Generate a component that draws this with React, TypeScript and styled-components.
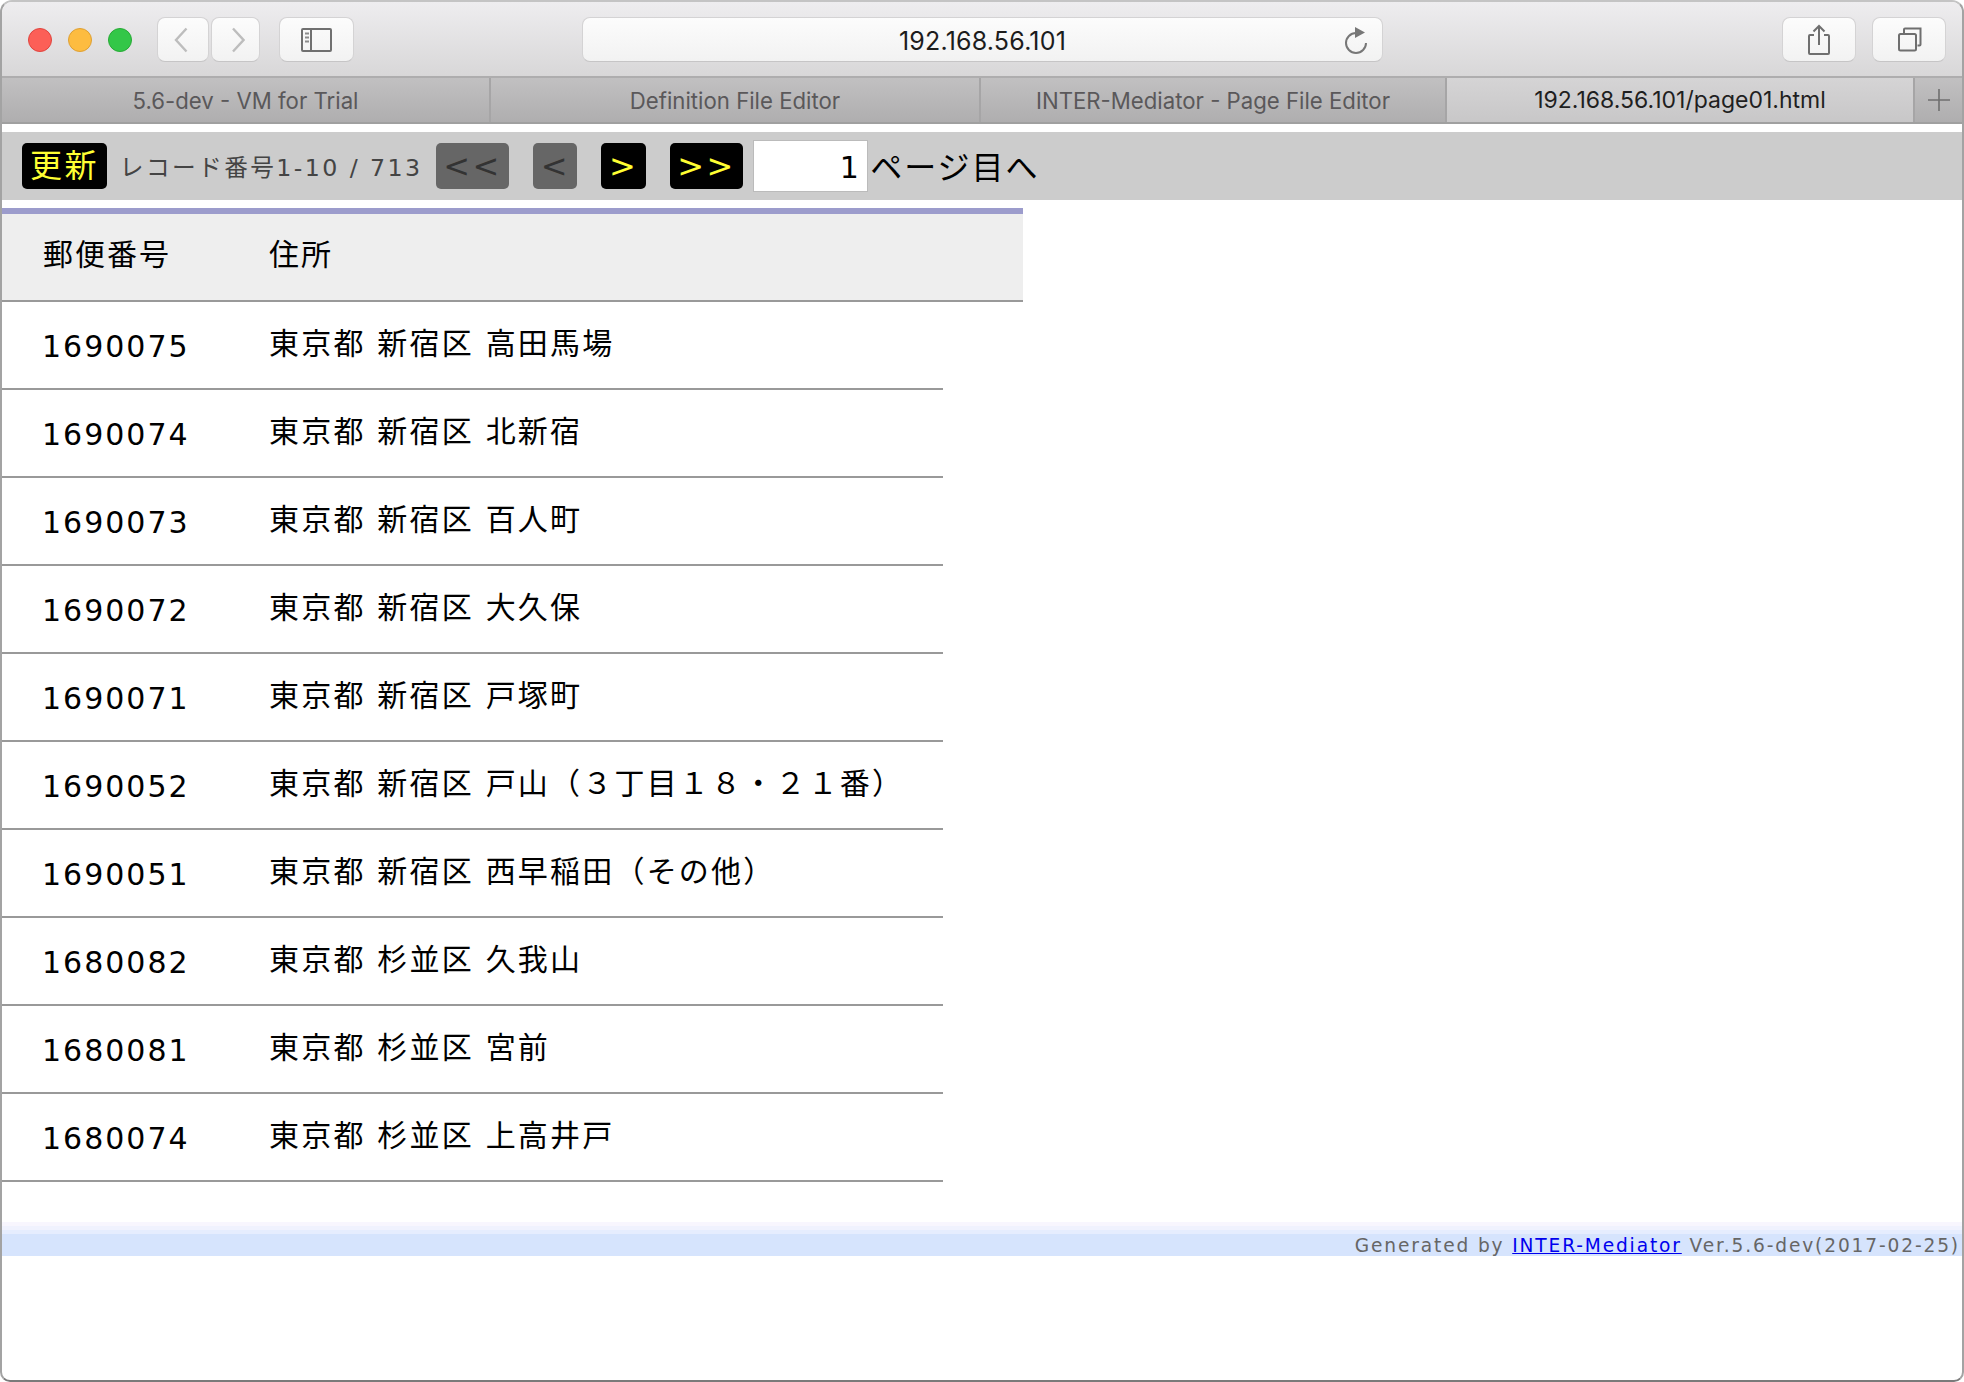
import * as React from 'react'
import styled, { createGlobalStyle } from 'styled-components'

const GlobalStyle = createGlobalStyle`
html, body {
    margin: 0;
    padding: 0;
    background: #fff;
    overflow: hidden;
}
* {
    box-sizing: border-box;
}
`

const Window = styled.div`
width: 1964px;
height: 1382px;
display: flex;
flex-direction: column;
background: #fff;
border: 2px solid #a3a3a3;
border-top-color: #c4c4c4;
border-bottom-color: #7a7a7a;
border-radius: 12px 12px 10px 10px;
overflow: hidden;
font-family: "DejaVu Sans", "Noto Sans CJK JP", sans-serif;
`

const TitleBar = styled.div`
height: 74px;
flex: none;
display: flex;
align-items: flex-start;
padding: 15px 16px 0 26px;
background: linear-gradient(#eeedef, #d8d7d8);
`

const Lights = styled.div`
display: flex;
gap: 16px;
margin: 11px 25px 0 0;
`

const Light = styled.span<{ $color: string; $edge: string }>`
width: 24px;
height: 24px;
border-radius: 50%;
background: ${p => p.$color};
border: 1px solid ${p => p.$edge};
`

const ToolButton = styled.div<{ $width: number; $gap?: number }>`
width: ${p => p.$width}px;
height: 45px;
flex: none;
display: flex;
align-items: center;
justify-content: center;
margin-right: ${p => p.$gap || 0}px;
background: linear-gradient(#fcfcfc, #f2f2f2);
border: 1px solid #d4d3d4;
border-bottom-color: #c6c5c6;
border-radius: 8px;
`

const UrlBar = styled.div`
width: 801px;
height: 45px;
flex: none;
margin: 0 auto 0 228px;
display: grid;
grid-template-columns: 1fr auto 1fr;
align-items: center;
padding-top: 3px;
background: linear-gradient(#fcfcfc, #f2f2f2);
border: 1px solid #d4d3d4;
border-bottom-color: #c6c5c6;
border-radius: 8px;
font-family: Inter, "Liberation Sans", sans-serif;
font-size: 25px;
letter-spacing: 0.2px;
color: #1c1c1c;
`

const Reload = styled.span`
justify-self: end;
display: flex;
margin: -3px 14px 0 0;
`

const TabStrip = styled.div`
height: 48px;
flex: none;
display: flex;
border-top: 2px solid #aeadae;
border-bottom: 2px solid #a0a0a0;
font-family: Inter, "Liberation Sans", sans-serif;
font-size: 22.2px;
`

const Tab = styled.div<{ $width: number; $active?: boolean }>`
width: ${p => p.$width}px;
flex: none;
display: flex;
align-items: center;
justify-content: center;
border-right: 2px solid #a6a5a6;
font-size: ${p => (p.$active ? '23px' : 'inherit')};
color: ${p => (p.$active ? '#1f1f1f' : '#5a585a')};
background: ${p => (p.$active ? 'linear-gradient(#d5d4d5, #c8c7c8)' : 'linear-gradient(#c1c0c1, #afaeaf)')};
`

const NewTab = styled.div`
flex: 1;
display: flex;
align-items: center;
justify-content: center;
background: linear-gradient(#c1c0c1, #afaeaf);
`

const NavBar = styled.div`
height: 68px;
flex: none;
margin-top: 8px;
display: flex;
align-items: center;
padding-left: 20px;
background: #ccc;
letter-spacing: 2.4px;
`

const NavButton = styled.div<{ $disabled?: boolean }>`
height: 46px;
flex: none;
display: flex;
align-items: center;
padding: 0 7.5px;
margin-right: 24px;
background: ${p => (p.$disabled ? '#666' : '#000')};
color: ${p => (p.$disabled ? '#333' : '#ff3')};
border-radius: 5px;
font-size: 32px;
line-height: 46px;
`

const RefreshButton = styled(NavButton)`
padding: 0 8px;
margin-right: 13px;
`

const RecordInfo = styled.span`
width: 316px;
flex: none;
font-size: 23.7px;
color: #444;
white-space: nowrap;
`

const PageInput = styled.div`
width: 115px;
height: 52px;
flex: none;
margin-left: -14px;
display: flex;
align-items: center;
justify-content: flex-end;
padding: 2px 6px 0 0;
background: #fff;
border: 1px solid #bbb;
color: #000;
font-size: 30px;
`

const PageLabel = styled.span`
margin: 0 0 3px 2px;
font-size: 32px;
letter-spacing: 2px;
color: #000;
white-space: nowrap;
`

const HeaderRow = styled.div`
width: 1021px;
height: 94px;
flex: none;
margin-top: 8px;
display: flex;
align-items: center;
padding-bottom: 10px;
background: #eee;
border-top: 6px solid #9c9ccc;
border-bottom: 2px solid #999;
font-size: 30px;
letter-spacing: 2px;
color: #000;
`

const BodyRow = styled.div`
width: 941px;
height: 88px;
flex: none;
display: flex;
align-items: center;
border-bottom: 2px solid #999;
font-size: 30px;
letter-spacing: 2.2px;
color: #000;
`

const ZipCell = styled.div`
width: 267px;
flex: none;
padding-left: 41px;
`

const ZipValue = styled.span`
position: relative;
top: 1px;
margin-left: -1px;
letter-spacing: 2px;
`

const AddressCell = styled.div`
flex: 1;
white-space: nowrap;
`

const BodyAddress = styled(AddressCell)`
margin-top: -8px;
`

const Footer = styled.div`
height: 34px;
flex: none;
margin-top: 40px;
display: flex;
justify-content: flex-end;
align-items: flex-end;
padding-right: 2px;
background: linear-gradient(#f8f6fe 0, #f8f6fe 4px, #f0f2fe 4px, #f0f2fe 8px, #e6edfe 8px, #e6edfe 12px, #d6e4fd 12px);
font-size: 18.6px;
line-height: 21px;
letter-spacing: 1.86px;
color: #666;
white-space: nowrap;

a {
    color: #00e;
}
`

const rows = [
    ['1690075', '東京都 新宿区 高田馬場'],
    ['1690074', '東京都 新宿区 北新宿'],
    ['1690073', '東京都 新宿区 百人町'],
    ['1690072', '東京都 新宿区 大久保'],
    ['1690071', '東京都 新宿区 戸塚町'],
    ['1690052', '東京都 新宿区 戸山（３丁目１８・２１番）'],
    ['1690051', '東京都 新宿区 西早稲田（その他）'],
    ['1680082', '東京都 杉並区 久我山'],
    ['1680081', '東京都 杉並区 宮前'],
    ['1680074', '東京都 杉並区 上高井戸'],
]

function Chevron({ dir }: { dir: 'left' | 'right' }) {
    return (
        <svg width="18" height="28" viewBox="0 0 18 28" fill="none" stroke="#bdbdbd" strokeWidth="2.4">
            <path d={dir === 'left' ? 'M12.5 2.5 L2 14 L12.5 25.5' : 'M6 2.5 L16.5 14 L6 25.5'} />
        </svg>
    )
}

function SidebarIcon() {
    return (
        <svg width="31" height="24" viewBox="0 0 31 24" fill="none" stroke="#707070" strokeWidth="2">
            <rect x="1" y="1" width="29" height="22" rx="1" />
            <path d="M10 1 V23" />
            <path d="M4 5.5 H8 M4 9.5 H8 M4 13.5 H8" stroke="#8c8c8c" />
        </svg>
    )
}

function ReloadIcon() {
    return (
        <svg width="24" height="28" viewBox="0 0 24 28" fill="none" stroke="#777" strokeWidth="2">
            <path d="M12 7 A10 10 0 1 0 22 17" />
            <path d="M11 1 L21 6.5 L11 12 Z" fill="#777" stroke="none" />
        </svg>
    )
}

function ShareIcon() {
    return (
        <svg width="24" height="32" viewBox="0 0 24 32" fill="none" stroke="#6f6f6f" strokeWidth="2">
            <path d="M7 11 H3 Q2 11 2 12 V29 Q2 30 3 30 H21 Q22 30 22 29 V12 Q22 11 21 11 H17" />
            <path d="M12 21 V2 M6.5 7.5 L12 2 L17.5 7.5" />
        </svg>
    )
}

function TabsIcon() {
    return (
        <svg width="25" height="25" viewBox="0 0 25 25" fill="none" stroke="#6f6f6f" strokeWidth="2">
            <path d="M7 6 V2.5 Q7 1.5 8 1.5 H23.5 V17.5 Q23.5 18.5 22.5 18.5 H20.5" />
            <rect x="2" y="7" width="17" height="16.5" rx="1.5" />
        </svg>
    )
}

export default function App() {
    return (
        <>
            <GlobalStyle />
            <Window>
                <TitleBar>
                    <Lights>
                        <Light $color="#fc5f57" $edge="#e0443e" />
                        <Light $color="#fdbc40" $edge="#dea034" />
                        <Light $color="#33c748" $edge="#27aa35" />
                    </Lights>
                    <ToolButton $width={52} $gap={2}><Chevron dir="left" /></ToolButton>
                    <ToolButton $width={49} $gap={19}><Chevron dir="right" /></ToolButton>
                    <ToolButton $width={75}><SidebarIcon /></ToolButton>
                    <UrlBar>
                        <span />
                        <span>192.168.56.101</span>
                        <Reload><ReloadIcon /></Reload>
                    </UrlBar>
                    <ToolButton $width={74} $gap={16}><ShareIcon /></ToolButton>
                    <ToolButton $width={74}><TabsIcon /></ToolButton>
                </TitleBar>
                <TabStrip>
                    <Tab $width={489}>5.6-dev - VM for Trial</Tab>
                    <Tab $width={490}>Definition File Editor</Tab>
                    <Tab $width={466}>INTER-Mediator - Page File Editor</Tab>
                    <Tab $width={468} $active>192.168.56.101/page01.html</Tab>
                    <NewTab>
                        <svg width="22" height="22" viewBox="0 0 22 22" stroke="#6f6f6f" strokeWidth="1.6">
                            <path d="M11 0 V22 M0 11 H22" />
                        </svg>
                    </NewTab>
                </TabStrip>
                <NavBar>
                    <RefreshButton>更新</RefreshButton>
                    <RecordInfo>レコード番号1-10 / 713</RecordInfo>
                    <NavButton $disabled>&lt;&lt;</NavButton>
                    <NavButton $disabled>&lt;</NavButton>
                    <NavButton>&gt;</NavButton>
                    <NavButton>&gt;&gt;</NavButton>
                    <PageInput>1</PageInput>
                    <PageLabel>ページ目へ</PageLabel>
                </NavBar>
                <HeaderRow>
                    <ZipCell>郵便番号</ZipCell>
                    <AddressCell>住所</AddressCell>
                </HeaderRow>
                {rows.map(([zip, address]) => (
                    <BodyRow key={zip}>
                        <ZipCell><ZipValue>{zip}</ZipValue></ZipCell>
                        <BodyAddress>{address}</BodyAddress>
                    </BodyRow>
                ))}
                <Footer>
                    <span>Generated by <a href="#im">INTER-Mediator</a> Ver.5.6-dev(2017-02-25)</span>
                </Footer>
            </Window>
        </>
    )
}
